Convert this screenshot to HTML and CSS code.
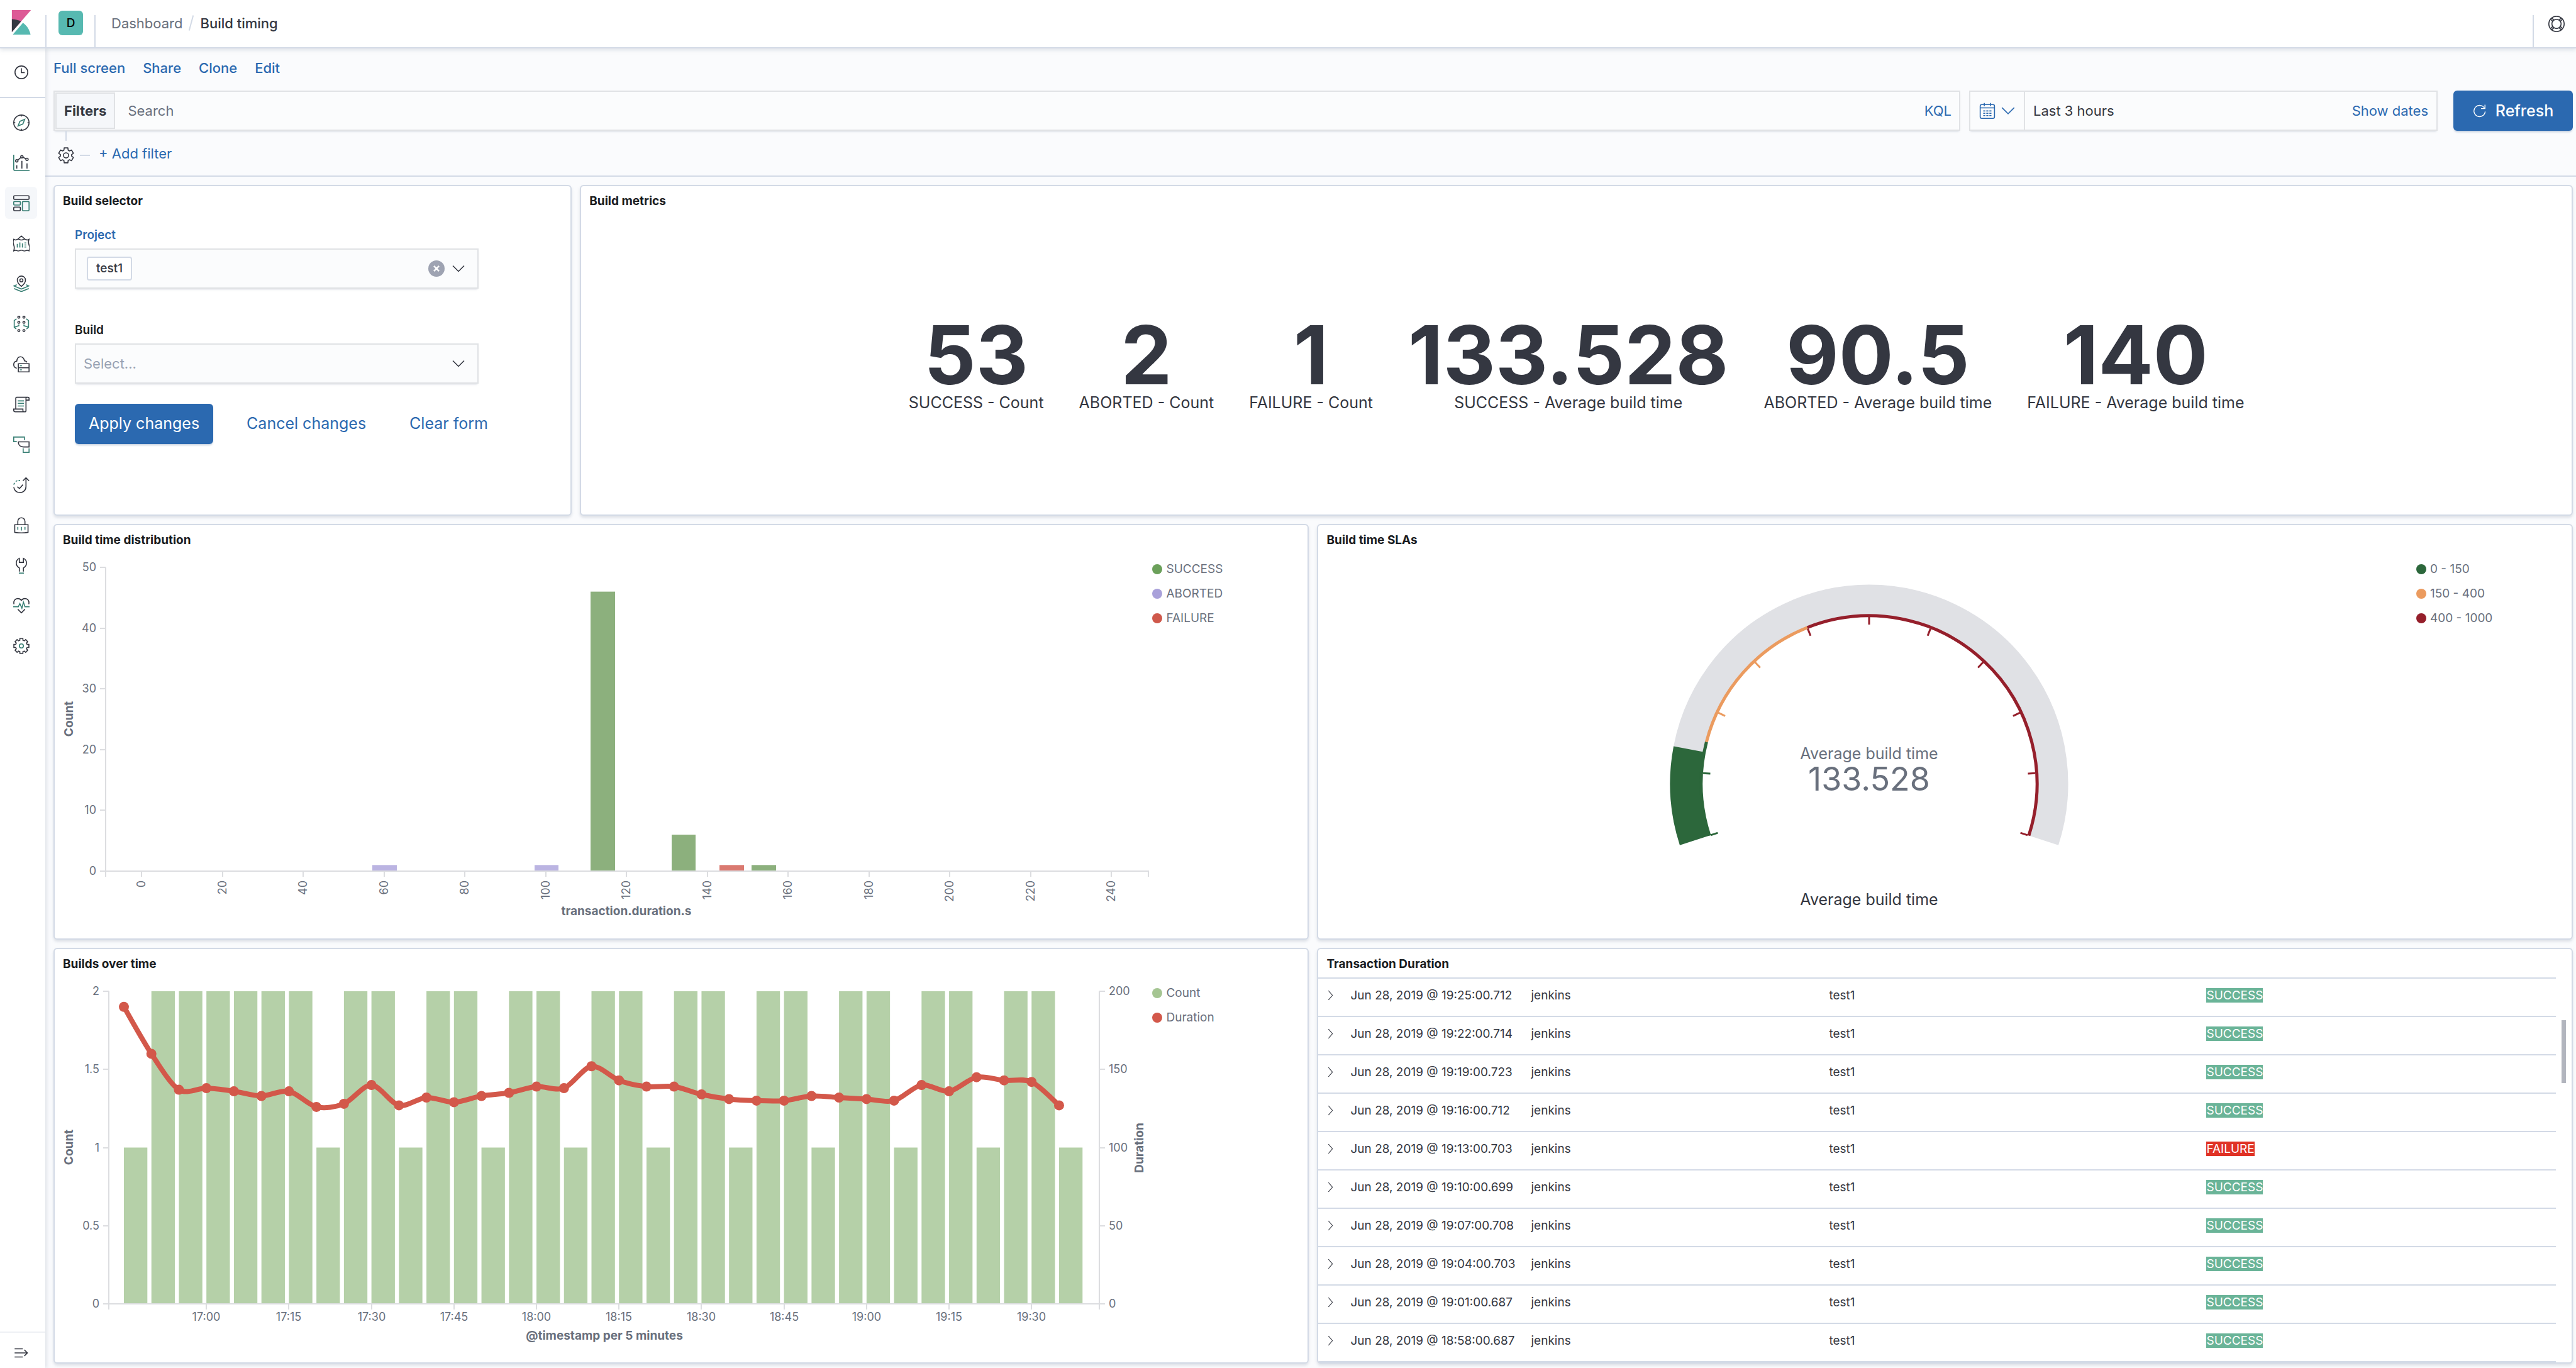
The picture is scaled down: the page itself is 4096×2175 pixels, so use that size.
FILE: index.html
```html
<!DOCTYPE html>
<html lang="en">
<head>
<meta charset="utf-8">
<title>Build timing - Kibana</title>
<meta name="viewport" content="width=device-width, initial-scale=1">
<link rel="stylesheet" href="styles.css">
</head>
<body>
<header class="header">
  <a class="header-logo" href="#home" aria-label="Kibana home">
    <svg class="logo" viewBox="0 0 32 32"><path fill="#dd5a96" d="M4 0v28.789L28.935.017z"/><path fill="#343741" d="M4 12v16.789l11.906-13.738A24.721 24.721 0 0 0 4 12"/><path fill="#57b9b1" d="M18.479 16.664L6.268 30.754l-1.073 1.237h23.191c-1.252-6.292-4.883-11.719-9.908-15.327"/></svg>
  </a>
  <span class="divider"></span>
  <button class="space" type="button" aria-label="Default space">D</button>
  <span class="divider"></span>
  <nav class="crumbs" aria-label="Breadcrumb">
    <a class="crumb" href="#dashboards">Dashboard</a>
    <span class="crumb-sep"></span>
    <span class="crumb crumb-current" aria-current="page">Build timing</span>
  </nav>
  <span class="divider"></span>
  <button class="help" type="button" aria-label="Help">
    <svg class="icon" viewBox="0 0 32 32"><circle cx="16" cy="16" r="15"/><circle cx="16" cy="16" r="9"/><path d="M6.500 4.500l4.500 4M4.500 7l4 4M27.500 25l-4-4M25.500 27.500l-4.500-4M25.500 4.500l-4.500 4M27.500 7l-4 4M4.500 25l4-4M6.500 27.500l4.500-4"/></svg>
  </button>
</header>
<div class="shell">
  <nav class="side" aria-label="Applications">
    <div class="side-recent">
      <a class="side-item" href="#recent" aria-label="Recently viewed"><svg class="icon" viewBox="0 0 32 32"><circle cx="16" cy="16" r="12.500"/><path d="M16 8v8.500h6.500"/></svg></a>
    </div>
    <div class="side-apps">
      <a class="side-item" href="#discover" aria-label="Discover"><svg class="icon" viewBox="0 0 32 32"><circle cx="16" cy="16" r="15"/><path d="M16 1v3M16 28v3M1 16h3M28 16h3"/><path class="accent" d="M22.500 9.500l-3.500 9-9.500 4L13 13.500z"/></svg></a>
      <a class="side-item" href="#visualize" aria-label="Visualize"><svg class="icon" viewBox="0 0 32 32"><path class="accent" d="M1 0v28a3 3 0 0 0 3 3h28"/><circle cx="7" cy="12" r="2.300"/><circle cx="17" cy="4" r="2.300"/><circle cx="27" cy="9" r="2.300"/><path d="M9 10.500l6-5M19 5l6 3M7 20.500v6.500M17 12v15M27 17v10"/></svg></a>
      <a class="side-item side-item-active" href="#dashboard" aria-label="Dashboard"><svg class="icon" viewBox="0 0 32 32"><rect x="1" y="1.500" width="30" height="7" rx="1.500"/><rect class="accent" x="1" y="12.700" width="13" height="7" rx="1.500"/><rect x="1" y="23.700" width="13" height="7" rx="1.500"/><rect class="accent" x="18" y="12.700" width="13" height="18" rx="1.500"/></svg></a>
      <a class="side-item" href="#canvas" aria-label="Canvas"><svg class="icon" viewBox="0 0 32 32"><path d="M1 8c2 1.500 4 1.500 6 .5s4-1 6 0 4 1 6 0 4-1 6 0 4 1 6-.5c-1.500 3.500-1.500 7 0 11s1.500 7.500 0 11.500c-2-1.500-4-1.500-6-.5s-4 1-6 0-4-1-6 0-4 1-6 0-4-1-6 .5c1.500-4 1.500-7.500 0-11.500s-1.500-7.500 0-11zM8.500 8L16 1.500 23.500 8"/><path class="accent" d="M8 17v7M13 14v10M18 16v8M22 15h3.500M22 19h3.500M22 23h3.500"/></svg></a>
      <a class="side-item" href="#maps" aria-label="Maps"><svg class="icon" viewBox="0 0 32 32"><path d="M16 21.500s-8-6.500-8-12.500a8 8 0 0 1 16 0c0 6-8 12.500-8 12.500z"/><circle cx="16" cy="9.500" r="3"/><path class="accent" d="M7 18l-5.500 2.500L16 26.500l14.500-6L25 18M1.500 25.500L16 31.500l14.500-6"/></svg></a>
      <a class="side-item" href="#ml" aria-label="Machine Learning"><svg class="icon" viewBox="0 0 32 32"><circle cx="11" cy="2.800" r="2"/><circle cx="21" cy="2.800" r="2"/><circle cx="11" cy="12.800" r="2"/><circle cx="21" cy="12.800" r="2"/><circle cx="11" cy="29" r="2"/><circle cx="21" cy="29" r="2"/><path class="accent" d="M6.500 6L2 9.500v13L6 26M2 22.500l9-3V17M25.500 6L30 9.500v13L26 26M30 22.500l-9-3V17"/></svg></a>
      <a class="side-item" href="#infra" aria-label="Infrastructure"><svg class="icon" viewBox="0 0 32 32"><path d="M7 24c-4-1-6-3.500-6-7 0-4 3-6.500 6-7C7.500 5 10 1.500 14 1.500s7 3 8 8c2 0 4 1 5 3M10 15h21v16H10zM10 23h21"/><path class="accent" d="M13 19h4M13 27h4"/></svg></a>
      <a class="side-item" href="#logs" aria-label="Logs"><svg class="icon" viewBox="0 0 32 32"><path d="M5 25V4a2 2 0 0 1 2-2h22a2 2 0 0 1 2 2v3.500h-6V4a2 2 0 0 1 2-2M25 7v21a2.500 2.500 0 0 1-2.500 2.500H4a3 3 0 0 1-3-3V25h18v3a2.500 2.500 0 0 0 2.500 2.500"/><path class="accent" d="M9 9h12M9 14h12M9 19h12"/></svg></a>
      <a class="side-item" href="#apm" aria-label="APM"><svg class="icon" viewBox="0 0 32 32"><path class="accent" d="M7 10H1V1h21v6M19.500 23v8H31v-8"/><path d="M10 10.500h21v10H20c-6 0-10-4-10-10z"/></svg></a>
      <a class="side-item" href="#uptime" aria-label="Uptime"><svg class="icon" viewBox="0 0 32 32"><path d="M1 20.500C2.500 27 7 31 13 31c7 0 12-5 12-12V2M19 8l6-6 6 6M8 19.500l4.300 3.500L19 15.500"/><path class="accent" d="M1 15.500c.5-1.500 1-2.500 1.800-3.500M5 9.500c1-.8 2-1.300 3-1.700M10.500 7.200h3"/></svg></a>
      <a class="side-item" href="#siem" aria-label="SIEM"><svg class="icon" viewBox="0 0 32 32"><path d="M9 14V8.500a7 7 0 0 1 14 0V14M3 15h26v15c-8 1.500-18 1.500-26 0z"/><path class="accent" d="M9 19.500v5.500M16 19.500v7M23 19.500v5.500"/></svg></a>
      <a class="side-item" href="#devtools" aria-label="Dev Tools"><svg class="icon" viewBox="0 0 32 32"><path d="M12 28v-7C8.500 19 6 16 6 11.500 6 7 8.500 3.500 12 2v8h8V2c3.500 1.500 6 5 6 9.500 0 4.500-2.500 7.500-6 9.500v7"/><path class="accent" d="M11 31h10"/></svg></a>
      <a class="side-item" href="#monitoring" aria-label="Stack Monitoring"><svg class="icon" viewBox="0 0 32 32"><path d="M1.500 13C0 6 4 2 9 2c3 0 5.500 1.500 7 3.500C17.500 3.500 20 2 23 2c5 0 9 4 7.500 11M9 23l7 7 7-7"/><path class="accent" d="M0 18h10l3-6 4 9 3-12 3 9h9"/></svg></a>
      <a class="side-item" href="#management" aria-label="Management"><svg class="icon" viewBox="0 0 32 32"><path d="M13 4.900l.1-3.600h5.800l.1 3.600 2.750 1.140L24.400 3.600l4 4-2.440 2.650L27.100 13l3.600.1v5.800l-3.600.1-1.140 2.750 2.440 2.650-4 4-2.650-2.440L19 27.100l-.1 3.600h-5.800l-.1-3.600-2.750-1.140L7.600 28.400l-4-4 2.440-2.650L4.900 19l-3.600-.1v-5.800l3.600-.1 1.140-2.750L3.600 7.600l4-4 2.650 2.440z"/><circle class="accent" cx="16" cy="16" r="4"/></svg></a>
    </div>
    <button class="side-toggle" type="button" aria-label="Expand navigation"><svg class="icon" viewBox="0 0 32 32"><path d="M4 8h16M4 16h24M4 24h16M23 10l6 6-6 6"/></svg></button>
  </nav>
  <main class="main">
    <section class="toolbar">
      <nav class="actions" aria-label="Dashboard actions">
        <a class="action" href="#fullscreen">Full screen</a>
        <a class="action" href="#share">Share</a>
        <a class="action" href="#clone">Clone</a>
        <a class="action" href="#edit">Edit</a>
      </nav>
      <div class="query">
        <div class="search">
          <button class="search-filters" type="button">Filters</button>
          <input class="search-input" type="text" placeholder="Search" aria-label="Search">
          <button class="link-button" type="button">KQL</button>
        </div>
        <div class="dates">
          <button class="dates-quick" type="button" aria-label="Quick time ranges">
            <svg class="icon icon-calendar" viewBox="0 0 32 32"><rect x="2" y="4" width="28" height="27" rx="3"/><path d="M2 10.500h28M10 1v6M22 1v6M8 16.500h4M14 16.500h4M20 16.500h4M8 21h4M14 21h4M20 21h4M8 25.500h4M14 25.500h4M20 25.500h4"/></svg>
            <svg class="icon" viewBox="0 0 32 32"><path d="M4 10l12 12 12-12"/></svg>
          </button>
          <button class="dates-range" type="button"><span>Last 3 hours</span><span class="dates-show">Show dates</span></button>
        </div>
        <button class="primary refresh" type="button">
          <svg class="icon" viewBox="0 0 32 32"><path d="M28 2v9h-9M27 10.500A13 13 0 1 0 28.500 18"/></svg>
          Refresh
        </button>
      </div>
      <div class="filters">
        <button class="filters-gear" type="button" aria-label="Change all filters"><svg class="icon" viewBox="0 0 32 32"><path stroke-linejoin="round" d="M11.900 5.800l.5-4.400h7.200l.5 4.400 2.700 1.500 4-1.700 3.600 6.300-3.500 2.600v3l3.500 2.600-3.600 6.300-4-1.700-2.700 1.500-.5 4.400h-7.200l-.5-4.400-2.700-1.500-4 1.700-3.600-6.300 3.500-2.600v-3l-3.500-2.600 3.600-6.300 4 1.700z"/><circle cx="16" cy="16" r="5"/></svg></button>
        <span class="filters-dash"></span>
        <button class="filters-add" type="button">+ Add filter</button>
      </div>
    </section>

    <div class="grid">
      <section class="panel panel-selector">
        <h2 class="panel-title">Build selector</h2>
        <form class="form">
          <label class="form-label form-label-active" for="project">Project</label>
          <div class="combo">
            <span class="pill">test1</span>
            <input class="combo-input" id="project" type="text">
            <button class="combo-clear" type="button" aria-label="Clear project"><svg class="clear-icon" viewBox="0 0 32 32"><circle cx="16" cy="16" r="16"/><path d="M11 11l10 10M21 11L11 21"/></svg></button>
            <svg class="icon" viewBox="0 0 32 32"><path d="M5 10.500l11 11 11-11"/></svg>
          </div>
          <label class="form-label" for="build">Build</label>
          <div class="picker">
            <select class="picker-select" id="build"><option>Select...</option></select>
            <svg class="icon picker-arrow" viewBox="0 0 32 32"><path d="M5 10.500l11 11 11-11"/></svg>
          </div>
          <div class="form-buttons">
            <button class="primary" type="button">Apply changes</button>
            <button class="plain" type="button">Cancel changes</button>
            <button class="plain" type="button">Clear form</button>
          </div>
        </form>
      </section>

      <section class="panel panel-metrics">
        <h2 class="panel-title">Build metrics</h2>
        <dl class="metrics">
          <div class="metric"><dd class="metric-value">53</dd><dt class="metric-label">SUCCESS - Count</dt></div>
          <div class="metric"><dd class="metric-value">2</dd><dt class="metric-label">ABORTED - Count</dt></div>
          <div class="metric"><dd class="metric-value">1</dd><dt class="metric-label">FAILURE - Count</dt></div>
          <div class="metric"><dd class="metric-value">133.528</dd><dt class="metric-label">SUCCESS - Average build time</dt></div>
          <div class="metric"><dd class="metric-value">90.5</dd><dt class="metric-label">ABORTED - Average build time</dt></div>
          <div class="metric"><dd class="metric-value">140</dd><dt class="metric-label">FAILURE - Average build time</dt></div>
        </dl>
      </section>

      <section class="panel panel-half">
        <h2 class="panel-title">Build time distribution</h2>
        <div class="viz">
          <svg class="chart" id="distribution" viewBox="0 0 1745 612" preserveAspectRatio="xMinYMin meet"></svg>
          <ul class="legend">
            <li class="legend-item"><span class="dot dot-success"></span>SUCCESS</li>
            <li class="legend-item"><span class="dot dot-aborted"></span>ABORTED</li>
            <li class="legend-item"><span class="dot dot-failure"></span>FAILURE</li>
          </ul>
        </div>
      </section>

      <section class="panel panel-half">
        <h2 class="panel-title">Build time SLAs</h2>
        <div class="viz">
          <svg class="chart" id="sla" viewBox="0 0 1745 612" preserveAspectRatio="xMinYMin meet"></svg>
          <ul class="legend">
            <li class="legend-item"><span class="dot dot-low"></span>0 - 150</li>
            <li class="legend-item"><span class="dot dot-mid"></span>150 - 400</li>
            <li class="legend-item"><span class="dot dot-high"></span>400 - 1000</li>
          </ul>
        </div>
      </section>

      <section class="panel panel-half">
        <h2 class="panel-title">Builds over time</h2>
        <div class="viz">
          <svg class="chart" id="timeline" viewBox="0 0 1745 612" preserveAspectRatio="xMinYMin meet"></svg>
          <ul class="legend">
            <li class="legend-item"><span class="dot dot-count"></span>Count</li>
            <li class="legend-item"><span class="dot dot-duration"></span>Duration</li>
          </ul>
        </div>
      </section>

      <section class="panel panel-half">
        <h2 class="panel-title">Transaction Duration</h2>
        <div class="docs">
          <table class="table">
            <colgroup><col class="col-toggle"><col class="col-time"><col class="col-service"><col class="col-name"><col></colgroup>
            <tbody>
              <tr><td><button class="row-toggle" type="button" aria-label="Expand row"><svg class="icon" viewBox="0 0 16 16"><path d="M5 1l6 7-6 7"/></svg></button></td><td>Jun 28, 2019 @ 19:25:00.712</td><td>jenkins</td><td>test1</td><td><span class="result result-success">SUCCESS</span></td></tr>
              <tr><td><button class="row-toggle" type="button" aria-label="Expand row"><svg class="icon" viewBox="0 0 16 16"><path d="M5 1l6 7-6 7"/></svg></button></td><td>Jun 28, 2019 @ 19:22:00.714</td><td>jenkins</td><td>test1</td><td><span class="result result-success">SUCCESS</span></td></tr>
              <tr><td><button class="row-toggle" type="button" aria-label="Expand row"><svg class="icon" viewBox="0 0 16 16"><path d="M5 1l6 7-6 7"/></svg></button></td><td>Jun 28, 2019 @ 19:19:00.723</td><td>jenkins</td><td>test1</td><td><span class="result result-success">SUCCESS</span></td></tr>
              <tr><td><button class="row-toggle" type="button" aria-label="Expand row"><svg class="icon" viewBox="0 0 16 16"><path d="M5 1l6 7-6 7"/></svg></button></td><td>Jun 28, 2019 @ 19:16:00.712</td><td>jenkins</td><td>test1</td><td><span class="result result-success">SUCCESS</span></td></tr>
              <tr><td><button class="row-toggle" type="button" aria-label="Expand row"><svg class="icon" viewBox="0 0 16 16"><path d="M5 1l6 7-6 7"/></svg></button></td><td>Jun 28, 2019 @ 19:13:00.703</td><td>jenkins</td><td>test1</td><td><span class="result result-failure">FAILURE</span></td></tr>
              <tr><td><button class="row-toggle" type="button" aria-label="Expand row"><svg class="icon" viewBox="0 0 16 16"><path d="M5 1l6 7-6 7"/></svg></button></td><td>Jun 28, 2019 @ 19:10:00.699</td><td>jenkins</td><td>test1</td><td><span class="result result-success">SUCCESS</span></td></tr>
              <tr><td><button class="row-toggle" type="button" aria-label="Expand row"><svg class="icon" viewBox="0 0 16 16"><path d="M5 1l6 7-6 7"/></svg></button></td><td>Jun 28, 2019 @ 19:07:00.708</td><td>jenkins</td><td>test1</td><td><span class="result result-success">SUCCESS</span></td></tr>
              <tr><td><button class="row-toggle" type="button" aria-label="Expand row"><svg class="icon" viewBox="0 0 16 16"><path d="M5 1l6 7-6 7"/></svg></button></td><td>Jun 28, 2019 @ 19:04:00.703</td><td>jenkins</td><td>test1</td><td><span class="result result-success">SUCCESS</span></td></tr>
              <tr><td><button class="row-toggle" type="button" aria-label="Expand row"><svg class="icon" viewBox="0 0 16 16"><path d="M5 1l6 7-6 7"/></svg></button></td><td>Jun 28, 2019 @ 19:01:00.687</td><td>jenkins</td><td>test1</td><td><span class="result result-success">SUCCESS</span></td></tr>
              <tr><td><button class="row-toggle" type="button" aria-label="Expand row"><svg class="icon" viewBox="0 0 16 16"><path d="M5 1l6 7-6 7"/></svg></button></td><td>Jun 28, 2019 @ 18:58:00.687</td><td>jenkins</td><td>test1</td><td><span class="result result-success">SUCCESS</span></td></tr>
            </tbody>
          </table>
          <div class="scroll"><span class="scroll-thumb"></span></div>
        </div>
      </section>
    </div>
  </main>
</div>
<script src="charts.js"></script>
</body>
</html>
```

FILE: styles.css
```css
:root {
  --blue: #2b69b0;
  --ink: #343741;
  --title: #1a1c21;
  --muted: #69707d;
  --line: #d3dae6;
  --field-line: #e0e2e5;
  --field: #fbfcfd;
  --page: #fafbfd;
  --text-axis: 18px;
  --text-small: 19px;
  --text-base: 22px;
  --text-large: 25px;
}

*,
*::before,
*::after {
  box-sizing: border-box;
}

body {
  margin: 0;
  min-height: 100vh;
  display: flex;
  flex-direction: column;
  background: var(--page);
  color: var(--ink);
  font: 400 var(--text-base)/32px Inter, "Liberation Sans", sans-serif;
}

a {
  color: var(--blue);
  text-decoration: none;
}

button,
input,
select {
  margin: 0;
  padding: 0;
  border: 0;
  background: none;
  color: inherit;
  font: inherit;
}

.icon {
  display: block;
  flex: none;
  width: 26px;
  height: 26px;
  fill: none;
  stroke: currentColor;
  stroke-width: 2;
}

.accent {
  stroke: #387f74;
}

/* Header */

.header {
  position: relative;
  z-index: 2;
  display: flex;
  align-items: center;
  height: 77px;
  padding-right: 18px;
  background: #fff;
  border-bottom: 2px solid var(--line);
  box-shadow: 0 3px 6px rgba(152, 162, 179, 0.25);
}

.header-logo {
  width: 72px;
  padding: 0 0 5px 14px;
}

.logo {
  display: block;
  width: 39px;
  height: 39px;
}

.divider {
  align-self: flex-end;
  width: 2px;
  height: 51px;
  background: var(--line);
}

.space {
  width: 39px;
  height: 39px;
  margin: 0 18px 2px 19px;
  border-radius: 6px;
  background: #57b9b1;
  color: #000;
  font-size: var(--text-small);
  font-weight: 500;
}

.crumbs {
  flex: 1;
  display: flex;
  align-items: center;
  margin-left: 25px;
  padding-bottom: 2px;
}

.crumb {
  color: var(--muted);
}

.crumb-current {
  color: var(--ink);
  font-weight: 500;
}

.crumb-sep {
  width: 2px;
  height: 25px;
  margin: 0 13px;
  background: var(--line);
  transform: rotate(15deg);
}

.help {
  margin-left: 23px;
}

/* Side navigation */

.shell {
  flex: 1;
  display: flex;
}

.side {
  position: relative;
  z-index: 1;
  display: flex;
  flex-direction: column;
  width: 72px;
  background: #fff;
  box-shadow: 2px 0 6px rgba(152, 162, 179, 0.3);
}

.side-recent {
  padding: 12px 8px 14px;
  border-bottom: 2px solid var(--line);
}

.side-apps {
  flex: 1;
  display: flex;
  flex-direction: column;
  gap: 13px;
  padding: 13px 8px;
}

.side-item {
  display: flex;
  align-items: center;
  justify-content: center;
  width: 51px;
  height: 51px;
  border-radius: 6px;
  color: var(--ink);
}

.side-item-active {
  background: #f5f7fa;
}

.side-toggle {
  display: flex;
  align-items: center;
  height: 58px;
  padding: 8px 20px 0;
  border-top: 2px solid #eef0f5;
}

/* Toolbar */

.main {
  flex: 1;
  min-width: 0;
  display: flex;
  flex-direction: column;
}

.toolbar {
  padding: 0 5px 0 13px;
  border-bottom: 2px solid var(--line);
}

.actions {
  display: flex;
  align-items: center;
  gap: 28px;
  height: 61px;
  margin-bottom: 6px;
  font-weight: 500;
}

.query {
  display: flex;
  height: 64px;
}

.search,
.dates {
  display: flex;
  background: var(--field);
  border: 2px solid var(--field-line);
  box-shadow: 0 3px 3px -2px rgba(152, 162, 179, 0.4);
}

.search {
  flex: 1;
  margin-right: 14px;
}

.search-filters {
  margin: 1px;
  padding: 0 12px;
  border: 2px solid var(--field-line);
  background: #f5f7fa;
  font-weight: 700;
}

.search-input {
  flex: 1;
  min-width: 0;
  padding: 0 19px;
  outline: 0;
}

.search-input::placeholder {
  color: var(--muted);
  opacity: 1;
}

.link-button {
  padding: 0 12px;
  color: var(--blue);
}

.dates {
  width: 745px;
  margin-right: 25px;
}

.dates-quick {
  display: flex;
  align-items: center;
  gap: 7px;
  padding: 0 12px 0 14px;
  border-right: 2px solid var(--field-line);
  color: var(--blue);
}

.dates-range {
  flex: 1;
  display: flex;
  justify-content: space-between;
  padding: 0 13px;
  align-items: center;
}

.dates-show {
  color: var(--blue);
}

.primary {
  height: 64px;
  padding: 0 22px 2px;
  border-radius: 6px;
  background: var(--blue);
  box-shadow: 0 3px 3px -1px rgba(60, 100, 150, 0.3);
  color: #fff;
  font-size: var(--text-large);
}

.refresh {
  display: flex;
  align-items: center;
  justify-content: center;
  gap: 14px;
  width: 190px;
  padding-bottom: 0;
  font-weight: 500;
}

.refresh .icon {
  width: 22px;
  height: 22px;
}

.filters {
  display: flex;
  align-items: center;
  height: 71px;
  padding: 6px 0 0 7px;
}

.filters-gear {
  position: relative;
}

.filters-gear::before {
  content: "";
  position: absolute;
  left: 12px;
  bottom: 36px;
  width: 2px;
  height: 16px;
  background: var(--line);
}

.filters-dash {
  width: 16px;
  height: 2px;
  margin: 0 14px 0 9px;
  background: var(--line);
}

.filters-add {
  padding-bottom: 6px;
  color: var(--blue);
}

/* Panels */

.grid {
  flex: 1;
  display: grid;
  grid-template-columns: repeat(48, 1fr);
  grid-template-rows: 526fr 661fr 661fr;
  gap: 13px;
  padding: 13px 5px 7px 13px;
}

.panel {
  display: flex;
  flex-direction: column;
  min-width: 0;
  overflow: hidden;
  background: #fff;
  border: 2px solid var(--line);
  border-radius: 6px;
  box-shadow: 0 3px 4px rgba(152, 162, 179, 0.3);
}

.panel-selector {
  grid-column: span 10;
}

.panel-metrics {
  grid-column: span 38;
}

.panel-half {
  grid-column: span 24;
}

.panel-title {
  margin: 0;
  padding: 10px 13px 7px;
  color: var(--title);
  font-size: var(--text-small);
  font-weight: 700;
  line-height: 28px;
}

/* Build selector */

.form {
  padding: 19px 32px;
}

.form-label {
  display: block;
  padding-bottom: 7px;
  color: var(--title);
  font-size: var(--text-small);
  font-weight: 600;
  line-height: 28px;
}

.form-label-active {
  color: var(--blue);
}

.combo,
.picker {
  width: 642px;
  max-width: 100%;
  height: 64px;
  background: var(--field);
  border: 2px solid var(--field-line);
  box-shadow: 0 3px 3px -2px rgba(152, 162, 179, 0.4);
}

.combo {
  display: flex;
  align-items: center;
  margin-bottom: 52px;
  padding: 0 17px;
}

.pill {
  padding: 0 13px;
  border: 2px solid var(--line);
  border-radius: 4px;
  background: #fff;
  font-size: var(--text-small);
  font-weight: 500;
  line-height: 34px;
}

.combo-input {
  flex: 1;
  min-width: 0;
  outline: 0;
}

.combo-clear {
  margin-right: 9px;
}

.clear-icon {
  display: block;
  width: 26px;
  height: 26px;
  fill: #9ea3b2;
  stroke: #fff;
  stroke-width: 3;
}

.clear-icon circle {
  stroke: none;
}

.picker {
  display: grid;
  align-items: center;
}

.picker > * {
  grid-area: 1 / 1;
}

.picker-select {
  height: 100%;
  padding: 0 12px;
  appearance: none;
  color: #98a2b3;
}

.picker-arrow {
  justify-self: end;
  margin-right: 17px;
  pointer-events: none;
}

.form-buttons {
  display: flex;
  gap: 14px;
  margin-top: 32px;
}

.plain {
  padding: 0 39px 2px;
  color: var(--blue);
  font-size: var(--text-large);
}

.form-buttons .plain + .plain {
  padding: 0 16px 2px;
}

/* Metrics */

.metrics {
  flex: 1;
  display: flex;
  align-items: center;
  justify-content: center;
  margin: 0;
}

.metric {
  display: flex;
  flex-direction: column;
  align-items: center;
  padding: 0 28px;
}

.metric-value {
  margin: 0;
  font-size: 129px;
  font-weight: 700;
  line-height: 120px;
}

.metric-label {
  font-size: var(--text-large);
  line-height: 32px;
}

/* Charts */

.viz {
  display: flex;
}

.chart {
  display: block;
  flex: 1;
  min-width: 0;
  height: 612px;
}

.legend {
  width: 247px;
  margin: 0;
  padding: 5px 0 0;
  list-style: none;
  color: var(--muted);
  font-size: var(--text-small);
  line-height: 39px;
}

.legend-item {
  display: flex;
  align-items: center;
  gap: 6px;
}

.dot {
  width: 16px;
  height: 16px;
  border-radius: 50%;
}

.dot-success { background: #6ba05a; }
.dot-aborted { background: #a9a1da; }
.dot-failure { background: #cf584b; }
.dot-low { background: #2c673b; }
.dot-mid { background: #eb9b5f; }
.dot-high { background: #951f2b; }
.dot-count { background: #a5c592; }
.dot-duration { background: #d3584a; }

.axis {
  fill: none;
  stroke: #dcdde0;
  stroke-width: 2;
}

.tick-label {
  fill: var(--muted);
  font-size: var(--text-axis);
}

.axis-title {
  fill: var(--muted);
  font-size: var(--text-small);
  font-weight: 700;
  text-anchor: middle;
}

.bar-success { fill: #8cb07d; }
.bar-aborted { fill: #bbb4e2; }
.bar-failure { fill: #da7970; }
.bar-count { fill: #b5d0a8; }

.line-duration {
  fill: none;
  stroke: #d3584a;
  stroke-width: 8;
}

.point-duration {
  fill: #d3584a;
}

.gauge {
  fill: none;
}

.gauge-track {
  stroke: #e0e1e5;
  stroke-width: 51;
}

.gauge-value {
  stroke: #2c673b;
  stroke-width: 51;
}

.gauge-scale {
  stroke-width: 5;
}

.gauge-tick {
  stroke-width: 3;
}

.scale-low { stroke: #2c673b; }
.scale-mid { stroke: #eb9b5f; }
.scale-high { stroke: #951f2b; }

.gauge-label {
  fill: var(--muted);
  font-size: var(--text-large);
  text-anchor: middle;
}

.gauge-number {
  fill: var(--muted);
  font-size: 52px;
  text-anchor: middle;
}

.gauge-title {
  fill: var(--ink);
  font-size: var(--text-large);
  text-anchor: middle;
}

/* Documents */

.docs {
  flex: 1;
  display: flex;
}

.table {
  flex: 1;
  width: 100%;
  table-layout: fixed;
  border-collapse: collapse;
  font-size: var(--text-small);
  line-height: 28px;
}

.table tr {
  height: 61px;
  border-top: 2px solid var(--line);
}

.table tr:last-child {
  border-bottom: 2px solid var(--line);
}

.table td {
  padding: 0 0 6px 13px;
}

.table td:first-child {
  padding-left: 11px;
}

.col-toggle { width: 38px; }
.col-time { width: 287px; }
.col-service { width: 474px; }
.col-name { width: 600px; }

.row-toggle {
  display: block;
}

.row-toggle .icon {
  width: 17px;
  height: 17px;
  stroke-width: 1;
}

.result {
  color: #fff;
}

.result-success { background: #6ab498; }
.result-failure { background: #e03225; }

.scroll {
  display: flex;
  justify-content: center;
  width: 25px;
  padding-top: 68px;
}

.scroll-thumb {
  width: 7px;
  height: 100px;
  background: #b2b5be;
}
```

FILE: charts.js
```js
const SVG_NS = "http://www.w3.org/2000/svg";

function draw(parent, name, attrs, text) {
  const node = document.createElementNS(SVG_NS, name);
  for (const key in attrs) node.setAttribute(key, attrs[key]);
  if (text !== undefined) node.textContent = text;
  parent.appendChild(node);
  return node;
}

function leftAxis(svg, area, labels) {
  const step = (area.bottom - area.top) / (labels.length - 1);
  draw(svg, "path", { class: "axis", d: `M${area.left} ${area.top}V${area.bottom + 9}` });
  labels.forEach((label, i) => {
    const y = Math.round(area.bottom - i * step);
    draw(svg, "path", { class: "axis", d: `M${area.left - 9} ${y}h9` });
    draw(svg, "text", { class: "tick-label", x: area.left - 15, y, dy: "0.36em", "text-anchor": "end" }, label);
  });
}

function sideTitle(svg, x, y, label) {
  draw(svg, "text", { class: "axis-title", transform: `translate(${x} ${y}) rotate(-90)` }, label);
}

/* Build time distribution */
(function () {
  const svg = document.getElementById("distribution");
  const area = { left: 81, right: 1739, top: 22, bottom: 505 };
  const perCount = (area.bottom - area.top) / 50;
  const bars = [
    { x: 505, width: 39, count: 1, kind: "aborted" },
    { x: 763, width: 38, count: 1, kind: "aborted" },
    { x: 852, width: 39, count: 46, kind: "success" },
    { x: 981, width: 38, count: 6, kind: "success" },
    { x: 1057, width: 39, count: 1, kind: "failure" },
    { x: 1108, width: 39, count: 1, kind: "success" }
  ];
  bars.forEach(b => {
    const height = b.count * perCount;
    draw(svg, "rect", { class: "bar-" + b.kind, x: b.x, y: area.bottom - height, width: b.width, height });
  });
  leftAxis(svg, area, ["0", "10", "20", "30", "40", "50"]);
  draw(svg, "path", { class: "axis", d: `M${area.left} ${area.bottom}H${area.right}v9` });
  for (let i = 0; i <= 12; i++) {
    const x = Math.round(138 + i * 128.5);
    draw(svg, "path", { class: "axis", d: `M${x} ${area.bottom}v9` });
    draw(svg, "text", { class: "tick-label", transform: `translate(${x} 520) rotate(-90)`, dy: "0.36em", "text-anchor": "end" }, String(i * 20));
  }
  draw(svg, "text", { class: "axis-title", x: 909, y: 575 }, "transaction.duration.s");
  sideTitle(svg, 29, 263, "Count");
})();

/* Build time SLAs */
(function () {
  const svg = document.getElementById("sla");
  const cx = 876;
  const cy = 366;
  const point = (value, r) => {
    const a = (198 - 0.216 * value) * Math.PI / 180;
    return [cx + r * Math.cos(a), cy - r * Math.sin(a)];
  };
  const arc = (from, to, r, cls) => {
    const big = (to - from) * 0.216 > 180 ? 1 : 0;
    draw(svg, "path", { class: "gauge " + cls, d: `M${point(from, r)}A${r} ${r} 0 ${big} 1 ${point(to, r)}` });
  };
  arc(0, 1000, 291, "gauge-track");
  arc(0, 133.528, 291, "gauge-value");
  arc(0, 150, 267, "gauge-scale scale-low");
  arc(150, 400, 267, "gauge-scale scale-mid");
  arc(400, 1000, 267, "gauge-scale scale-high");
  for (let v = 0; v <= 1000; v += 100) {
    const band = v < 150 ? "low" : v < 400 ? "mid" : "high";
    draw(svg, "path", { class: "gauge-tick scale-" + band, d: `M${point(v, 265)}L${point(v, 253)}` });
  }
  draw(svg, "text", { class: "gauge-label", x: cx, y: 327 }, "Average build time");
  draw(svg, "text", { class: "gauge-number", x: cx, y: 377 }, "133.528");
  draw(svg, "text", { class: "gauge-title", x: cx, y: 559 }, "Average build time");
})();

/* Builds over time */
(function () {
  const svg = document.getElementById("timeline");
  const area = { left: 86, right: 1661, top: 22, bottom: 519 };
  const first = 110;
  const step = 43.735;
  const counts = [1, 2, 2, 2, 2, 2, 2, 1, 2, 2, 1, 2, 2, 1, 2, 2, 1, 2, 2, 1, 2, 2, 1, 2, 2, 1, 2, 2, 1, 2, 2, 1, 2, 2, 1];
  const durations = [190, 160, 137, 138, 136, 133, 136, 126, 128, 140, 127, 132, 129, 133, 135, 139, 138, 152, 143, 139, 139, 134, 131, 130, 130, 133, 132, 131, 130, 140, 136, 145, 143, 142, 127];
  const height = area.bottom - area.top;
  counts.forEach((count, i) => {
    const h = height * count / 2;
    draw(svg, "rect", { class: "bar-count", x: first + i * step, y: area.bottom - h, width: 37.3, height: h });
  });
  leftAxis(svg, area, ["0", "0.5", "1", "1.5", "2"]);
  draw(svg, "path", { class: "axis", d: `M${area.left} ${area.bottom}H${area.right}M${area.right} ${area.top}V${area.bottom + 9}` });
  ["0", "50", "100", "150", "200"].forEach((label, i) => {
    const y = Math.round(area.bottom - i * height / 4);
    draw(svg, "path", { class: "axis", d: `M${area.right} ${y}h9` });
    draw(svg, "text", { class: "tick-label", x: area.right + 15, y, dy: "0.36em" }, label);
  });
  ["17:00", "17:15", "17:30", "17:45", "18:00", "18:15", "18:30", "18:45", "19:00", "19:15", "19:30"].forEach((label, i) => {
    const x = Math.round(first + (i + 1) * 3 * step);
    draw(svg, "path", { class: "axis", d: `M${x} ${area.bottom}v9` });
    draw(svg, "text", { class: "tick-label", x, y: 546, "text-anchor": "middle" }, label);
  });
  const points = durations.map((v, i) => [first + i * step, area.bottom - height * v / 200]);
  let d = "M" + points[0];
  for (let i = 1; i < points.length; i++) {
    const p0 = points[Math.max(i - 2, 0)];
    const p1 = points[i - 1];
    const p2 = points[i];
    const p3 = points[Math.min(i + 1, points.length - 1)];
    const c1 = [p1[0] + (p2[0] - p0[0]) * 0.15, p1[1] + (p2[1] - p0[1]) * 0.15];
    const c2 = [p2[0] - (p3[0] - p1[0]) * 0.15, p2[1] - (p3[1] - p1[1]) * 0.15];
    d += `C${c1} ${c2} ${p2}`;
  }
  draw(svg, "path", { class: "line-duration", d });
  points.forEach(p => draw(svg, "circle", { class: "point-duration", cx: p[0], cy: p[1], r: 8 }));
  draw(svg, "text", { class: "axis-title", x: 874, y: 576 }, "@timestamp per 5 minutes");
  sideTitle(svg, 29, 270, "Count");
  sideTitle(svg, 1731, 271, "Duration");
})();
```
